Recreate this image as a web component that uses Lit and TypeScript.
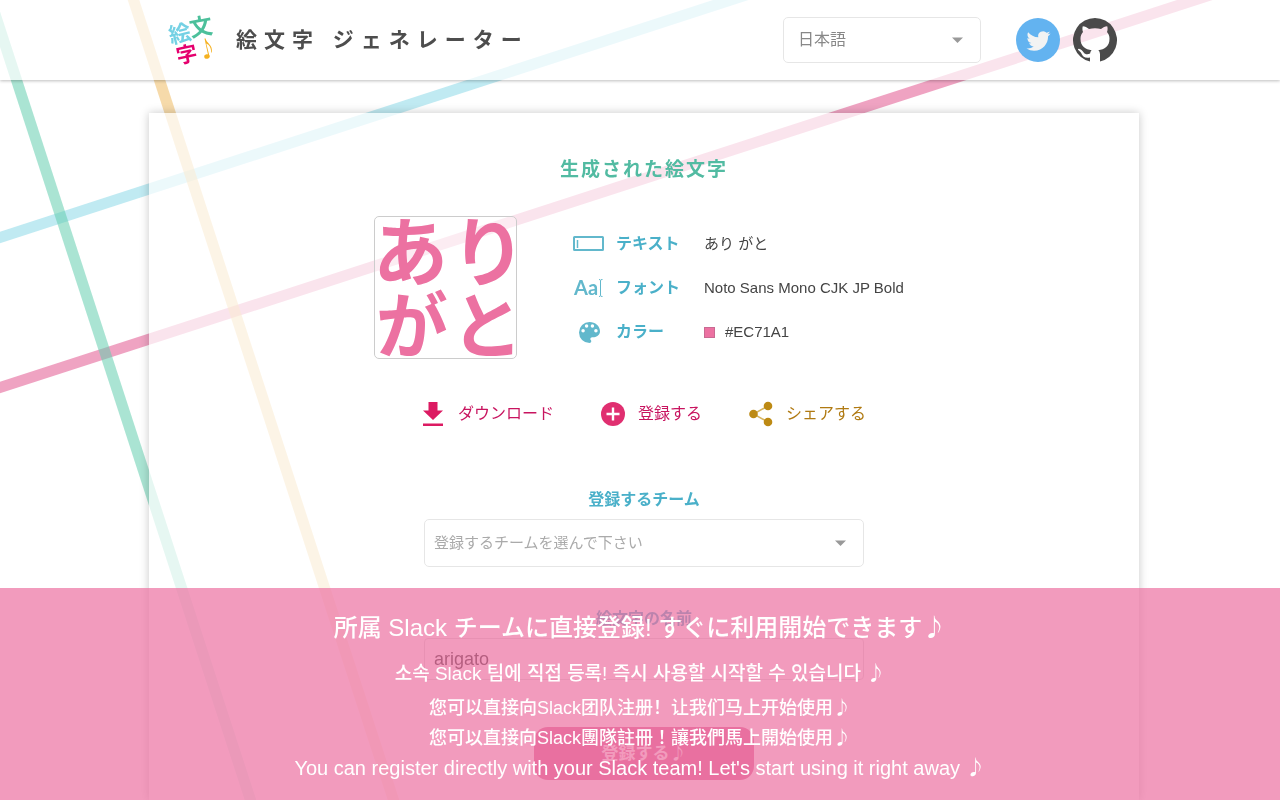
import { LitElement, html, css } from "lit";
import { customElement, state } from "lit/decorators.js";

const arrow = html`<svg class="arrow" viewBox="0 0 12 6" width="12" height="6" aria-hidden="true"><path d="M0 0.500h11L5.500 6z" fill="#999" /></svg>`;
const note = html`<span class="note">♪</span>`;

@customElement("app-root")
export class AppRoot extends LitElement {
  @state() private emojiName = "arigato";

  static styles = css`
    :host {
      display: block;
      color: #444;
      font-family: "Liberation Sans", "Noto Sans CJK JP", sans-serif;
      font-size: 16px;
      line-height: 24px;
    }
    * { box-sizing: border-box; }
    h1, h2, p, dl, dd, dt { margin: 0; }
    button, select, input { font: inherit; color: inherit; }
    .note { font-family: "Noto Sans CJK JP", sans-serif; line-height: 1; }
    .page { display: flex; flex-direction: column; min-height: 100vh; }
    .stripes { position: fixed; inset: 0; z-index: -1; width: 100%; height: 100%; }

    .header {
      background: rgba(255, 255, 255, 0.7);
      box-shadow: 0 1px 3px rgba(0, 0, 0, 0.26);
      clip-path: inset(0 0 -8px 0);
    }
    .bar {
      display: flex;
      align-items: center;
      max-width: 960px;
      height: 80px;
      margin: 0 auto;
      padding: 0 3px 0 8px;
    }
    .logo { flex: none; margin-right: 19px; overflow: visible; }
    .title { flex: 1; font-size: 21px; letter-spacing: 7px; line-height: 32px; color: #4d4d4d; white-space: nowrap; }
    .lang { width: 198px; height: 46px; margin-right: 35px; }
    .icons { display: flex; gap: 13px; }
    .icons a, .icons svg { display: block; }

    .pick { display: grid; align-items: stretch; }
    .pick > * { grid-area: 1 / 1; }
    .pick select {
      appearance: none;
      width: 100%;
      border: 1px solid #e6e6e6;
      border-radius: 5px;
      background: transparent;
      outline: 0;
    }
    .lang select { padding: 0 14px; color: #888; }
    .arrow { align-self: center; justify-self: end; margin-right: 17px; pointer-events: none; }

    .main { flex: 1; display: flex; padding: 33px 16px 0 24px; }
    .card {
      width: 100%;
      max-width: 990px;
      margin: 0 auto;
      padding: 41px 20px 20px;
      background: rgba(255, 255, 255, 0.7);
      box-shadow: 0 0 9px rgba(0, 0, 0, 0.22);
      clip-path: inset(-12px -12px 0 -12px);
      display: flex;
      flex-direction: column;
      align-items: center;
    }
    .heading { font-size: 19px; line-height: 32px; letter-spacing: 2px; color: #52bba2; }

    .result { display: flex; gap: 56px; margin-top: 30px; width: 540px; }
    .emoji {
      flex: none;
      width: 143px;
      height: 143px;
      padding: 1px;
      border: 1px solid #ccc;
      border-radius: 5px;
      background: rgba(255, 255, 255, 0.3);
      color: #ec71a1;
    }
    .emoji svg { display: block; overflow: visible; }
    .glyph { font: 700 72px "Noto Sans CJK JP", sans-serif; fill: #ec71a1; }
    .glyph.tall { font-size: 75px; }
    .facts { display: grid; gap: 20px; padding-top: 16px; align-content: start; }
    .fact { display: grid; grid-template-columns: 32px 88px auto; align-items: center; line-height: 24px; }
    .fact dt { display: contents; color: #4ab0c9; font-weight: 700; }
    .fact svg { justify-self: center; overflow: visible; }
    .name { padding-left: 11px; }
    .fact dd { display: flex; align-items: center; gap: 10px; padding-left: 11px; font-size: 15px; color: #444; }
    .swatch { width: 11px; height: 11px; background: #ec71a1; outline: 1px solid #c96a92; outline-offset: -1px; }

    .actions { display: flex; gap: 46px; margin-top: 39px; }
    .action {
      display: flex;
      align-items: center;
      gap: 12px;
      padding: 0;
      border: 0;
      background: none;
      height: 32px;
      color: #c8145f;
      cursor: pointer;
    }
    .share { color: #b07a12; }

    .field { display: grid; gap: 7px; width: 440px; justify-items: center; }
    .field > label { color: #4ab0c9; font-weight: 700; }
    .team { margin-top: 58px; }
    .team .pick { width: 100%; height: 48px; }
    .team select { padding: 0 9px; font-size: 15px; color: #aaa; }
    .nameField { margin-top: 40px; }
    .nameField input {
      width: 100%;
      height: 42px;
      padding: 0 9px;
      border: 1px solid #ddd;
      border-radius: 4px;
      background: transparent;
      font-size: 18px;
      color: #333;
    }
    .submit {
      width: 220px;
      height: 53px;
      margin-top: 47px;
      border: 0;
      border-radius: 14px;
      background: #e0719e;
      color: #fff;
      font-weight: 700;
      font-size: 17px;
    }

    .banner {
      position: fixed;
      left: 0;
      right: 0;
      bottom: 0;
      padding: 24px 20px 17px;
      background: rgba(236, 113, 161, 0.7);
      color: #fff;
      text-align: center;
      font-weight: 500;
    }
    .banner p { font-size: 18px; line-height: 30px; }
    .banner .lead { font-size: 24px; line-height: 32px; }
    .banner .ko { font-family: "Liberation Sans", "Noto Sans CJK KR", sans-serif; font-size: 19px; margin: 15px 0 4px; }
    .banner .hans { font-family: "Liberation Sans", "Noto Sans CJK SC", sans-serif; }
    .banner .hant { font-family: "Liberation Sans", "Noto Sans CJK TC", sans-serif; }
    .banner .en { font-size: 20px; }
  `;

  private stripes() {
    return html`<svg class="stripes" aria-hidden="true">
      <g stroke-width="11" stroke-opacity="0.55">
        <line x1="-100" y1="270" x2="900" y2="-55" stroke="#8cd9e7" />
        <line x1="-100" y1="420" x2="1500" y2="-99" stroke="#e25890" />
        <line x1="101" y1="-100" x2="556" y2="1300" stroke="#efbc64" />
        <line x1="-42" y1="-100" x2="413" y2="1300" stroke="#64ceaf" />
      </g>
    </svg>`;
  }

  private logo() {
    return html`<svg class="logo" width="49" height="56" viewBox="0 0 49 56" role="img" aria-label="絵文字♪"
      font-family="Noto Sans CJK JP, sans-serif" font-weight="700">
      <text transform="translate(3 32) rotate(-14)" font-size="22" fill="#74d1e4">絵</text>
      <text transform="translate(23 25) rotate(-10)" font-size="23" fill="#4cc09b">文</text>
      <text transform="translate(10 52) rotate(-12)" font-size="21" fill="#e5006e">字</text>
      <g fill="#f5b120"><ellipse cx="39" cy="44.500" rx="2.800" ry="2.200" transform="rotate(-14 39 44.500)" />
      <path d="M36.500 26.500h1.100c.5 4.500 7.500 6 6.200 14h-.7c.3-5.500-2.600-8-4.800-9l3 12-1 .4z" /></g>
    </svg>`;
  }

  render() {
    return html`
      <div class="page">
        ${this.stripes()}
        <header class="header">
          <div class="bar">
            ${this.logo()}
            <h1 class="title">絵文字 ジェネレーター</h1>
            <div class="pick lang">
              <select aria-label="言語">
                <option>日本語</option>
                <option>English</option>
              </select>
              ${arrow}
            </div>
            <nav class="icons">
              <a href="#twitter" aria-label="Twitter">
                <svg width="44" height="44" viewBox="0 0 44 44">
                  <circle cx="22" cy="22" r="22" fill="#63b3f0" />
                  <g transform="translate(10.500 11) scale(1)">
                    <path fill="#f2f3f3" d="M23.953 4.570a10 10 0 01-2.825.775 4.958 4.958 0 002.163-2.723c-.951.555-2.005.959-3.127 1.184a4.920 4.920 0 00-8.384 4.482C7.690 8.095 4.067 6.130 1.640 3.162a4.822 4.822 0 00-.666 2.475c0 1.710.870 3.213 2.188 4.096a4.904 4.904 0 01-2.228-.616v.060a4.923 4.923 0 003.946 4.827 4.996 4.996 0 01-2.212.085 4.936 4.936 0 004.604 3.417 9.867 9.867 0 01-6.102 2.105c-.390 0-.779-.023-1.170-.067a13.995 13.995 0 007.557 2.209c9.053 0 13.998-7.496 13.998-13.985 0-.210 0-.420-.015-.630A9.935 9.935 0 0024 4.590z" />
                  </g>
                </svg>
              </a>
              <a href="#github" aria-label="GitHub">
                <svg width="44" height="44" viewBox="0 0 44 44">
                  <path fill="#4a4a4a" d="M27 43.500A22 22 0 1 0 17 43.500V39.500C12 40.500 9.800 38.500 8.800 36.200C8 34.300 6.500 33 5 31.800C4.600 31 5.500 30.700 6.500 30.900C8.300 31.300 9.500 32.600 10.500 34.200C12 36.500 14.500 36.600 17.100 35.600C17.300 34 17.900 33 18.700 32.300C12.500 31.500 7.500 28.500 7.500 20.800C7.500 17.800 8.400 15.700 10 13.900C9.300 12.200 9.200 10 9.800 8.200C12 8.200 14 9.600 16 10.900C20 9.900 24 9.900 28 10.900C30 9.600 32 8.200 34.200 8.200C34.800 10 34.700 12.200 34 13.900C35.600 15.700 36.500 17.800 36.500 20.800C36.500 28.500 31.500 31.500 25.300 32.300C26.400 33.300 27 34.700 27 36.800Z" />
                </svg>
              </a>
            </nav>
          </div>
        </header>

        <main class="main">
          <section class="card">
            <h2 class="heading">生成された絵文字</h2>
            <div class="result">
              <div class="emoji">
                <svg width="139" height="139" viewBox="0 0 139 139" role="img" aria-label="ありがと">
                  <text class="glyph tall" x="-3" y="62">あ</text>
                  <text class="glyph tall" x="75" y="62">り</text>
                  <text class="glyph" x="0" y="134">が</text>
                  <text class="glyph" x="75" y="134">と</text>
                </svg>
              </div>
              <dl class="facts">
                <div class="fact">
                  <dt>
                    <svg width="32" height="16" viewBox="0 0 32 16" fill="none" stroke="#62b8cc"><rect x="1" y="1" width="29" height="13" rx="0.500" stroke-width="2" /><path d="M4.500 4v8" stroke-width="1.500" /></svg>
                    <span class="name">テキスト</span>
                  </dt>
                  <dd>あり がと</dd>
                </div>
                <div class="fact">
                  <dt>
                    <svg width="30" height="20" viewBox="0 0 30 20"><text x="0" y="17" font-family="Lato, sans-serif" font-weight="700" font-size="20" fill="#62b8cc">Aa</text><path d="M25 1.500q1.500 0 1.500 1v15q0 1-1.500 1M28.500 1.500q-2 0-2 1M26.500 17.500q0 1 2 1" fill="none" stroke="#62b8cc" /></svg>
                    <span class="name">フォント</span>
                  </dt>
                  <dd>Noto Sans Mono CJK JP Bold</dd>
                </div>
                <div class="fact">
                  <dt>
                    <svg width="21" height="21" viewBox="3 3 18 18"><path fill="#62b8cc" d="M12 3a9 9 0 0 0 0 18c.83 0 1.500-.67 1.500-1.500 0-.39-.15-.74-.39-1.010-.23-.26-.38-.61-.38-.99 0-.83.67-1.500 1.500-1.500H16c2.760 0 5-2.240 5-5 0-4.420-4.030-8-9-8zm-5.500 9a1.500 1.500 0 1 1 0-3 1.500 1.500 0 0 1 0 3zm3-4a1.500 1.500 0 1 1 0-3 1.500 1.500 0 0 1 0 3zm5 0a1.500 1.500 0 1 1 0-3 1.500 1.500 0 0 1 0 3zm3 4a1.500 1.500 0 1 1 0-3 1.500 1.500 0 0 1 0 3z" /></svg>
                    <span class="name">カラー</span>
                  </dt>
                  <dd><span class="swatch"></span>#EC71A1</dd>
                </div>
              </dl>
            </div>

            <div class="actions">
              <button class="action" type="button">
                <svg width="24" height="24" viewBox="0 0 24 24" fill="#dc1a62"><path d="M6.500 0h9v8.500H21L11 18 1 8.500h5.500zM1 21.500h20V24H1z" /></svg>
                ダウンロード
              </button>
              <button class="action" type="button">
                <svg width="26" height="26" viewBox="0 0 26 26"><circle cx="13" cy="13" r="12" fill="#e02f70" /><path d="M13 6.500v13M6.500 13h13" stroke="#fff" stroke-width="2.400" /></svg>
                登録する
              </button>
              <button class="action share" type="button">
                <svg width="26" height="26" viewBox="0 0 26 26"><path d="M20 5L5.500 13 20 21" fill="none" stroke="#d5b45e" stroke-width="1.500" /><g fill="#bd8a14"><circle cx="20" cy="5" r="4.300" /><circle cx="5.500" cy="13" r="4.300" /><circle cx="20" cy="21" r="4.300" /></g></svg>
                シェアする
              </button>
            </div>

            <div class="field team">
              <label for="team">登録するチーム</label>
              <div class="pick">
                <select id="team"><option>登録するチームを選んで下さい</option></select>
                ${arrow}
              </div>
            </div>
            <div class="field nameField">
              <label for="emoji-name">絵文字の名前</label>
              <input id="emoji-name" type="text" .value=${this.emojiName}
                @input=${(e: Event) => (this.emojiName = (e.target as HTMLInputElement).value)} />
            </div>
            <button class="submit" type="button">登録する${note}</button>
          </section>
        </main>

        <aside class="banner">
          <p class="lead">所属 Slack チームに直接登録! すぐに利用開始できます${note}</p>
          <p class="ko" lang="ko">소속 Slack 팀에 직접 등록! 즉시 사용할 시작할 수 있습니다 ${note}</p>
          <p class="hans" lang="zh-Hans">您可以直接向Slack团队注册！让我们马上开始使用${note}</p>
          <p class="hant" lang="zh-Hant">您可以直接向Slack團隊註冊！讓我們馬上開始使用${note}</p>
          <p class="en" lang="en">You can register directly with your Slack team! Let's start using it right away ${note}</p>
        </aside>
      </div>
    `;
  }
}
